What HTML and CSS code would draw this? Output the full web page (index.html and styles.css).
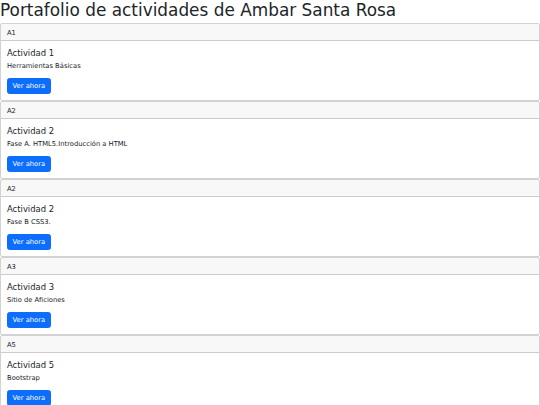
FILE: index.html
```html
<!DOCTYPE html>
<html lang="es">
<head>
<meta charset="utf-8">
<title>Portafolio</title>
<link rel="stylesheet" href="styles.css">
</head>
<body>
<h1 class="page-title">Portafolio de actividades de Ambar Santa Rosa</h1>
<div class="card">
  <div class="card-header">A1</div>
  <div class="card-body">
    <h5 class="card-title">Actividad 1</h5>
    <p class="card-text">Herramientas Básicas</p>
    <a class="btn" href="#">Ver ahora</a>
  </div>
</div>
<div class="card">
  <div class="card-header">A2</div>
  <div class="card-body">
    <h5 class="card-title">Actividad 2</h5>
    <p class="card-text">Fase A. HTML5.Introducción a HTML</p>
    <a class="btn" href="#">Ver ahora</a>
  </div>
</div>
<div class="card">
  <div class="card-header">A2</div>
  <div class="card-body">
    <h5 class="card-title">Actividad 2</h5>
    <p class="card-text">Fase B CSS3.</p>
    <a class="btn" href="#">Ver ahora</a>
  </div>
</div>
<div class="card">
  <div class="card-header">A3</div>
  <div class="card-body">
    <h5 class="card-title">Actividad 3</h5>
    <p class="card-text">Sitio de Aficiones</p>
    <a class="btn" href="#">Ver ahora</a>
  </div>
</div>
<div class="card">
  <div class="card-header">A5</div>
  <div class="card-body">
    <h5 class="card-title">Actividad 5</h5>
    <p class="card-text">Bootstrap</p>
    <a class="btn" href="#">Ver ahora</a>
  </div>
</div>
</body>
</html>
```
FILE: styles.css
```css
body {
  margin: 0;
  padding: 0;
  background: #fff;
  font-family: "DejaVu Sans", sans-serif;
  font-size: 6.75px;
  line-height: 10px;
  color: #212529;
}
.page-title {
  margin: 0 0 3px;
  height: 20px;
  font-size: 16.9px;
  font-weight: 400;
  line-height: 20px;
}
.card {
  border: 1px solid rgba(0, 0, 0, 0.175);
  border-radius: 2.5px;
  background: #fff;
  overflow: hidden;
}
.card-header {
  height: 17px;
  box-sizing: border-box;
  padding: 3.5px 6px;
  line-height: 10px;
  background: rgba(33, 37, 41, 0.03);
  border-bottom: 1px solid rgba(0, 0, 0, 0.175);
}
.card-body {
  padding: 7px 6px 6px;
}
.card-title {
  margin: 0 0 3px;
  height: 10px;
  font-size: 8.44px;
  font-weight: 400;
  line-height: 11px;
}
.card-text {
  margin: 0 0 7px;
  height: 10px;
  line-height: 11px;
}
.btn {
  display: block;
  width: max-content;
  height: 16px;
  box-sizing: border-box;
  padding: 0 4.5px;
  line-height: 14px;
  color: #fff;
  background: #0d6efd;
  border: 1px solid #0d6efd;
  border-radius: 2.5px;
  text-decoration: none;
}
```
